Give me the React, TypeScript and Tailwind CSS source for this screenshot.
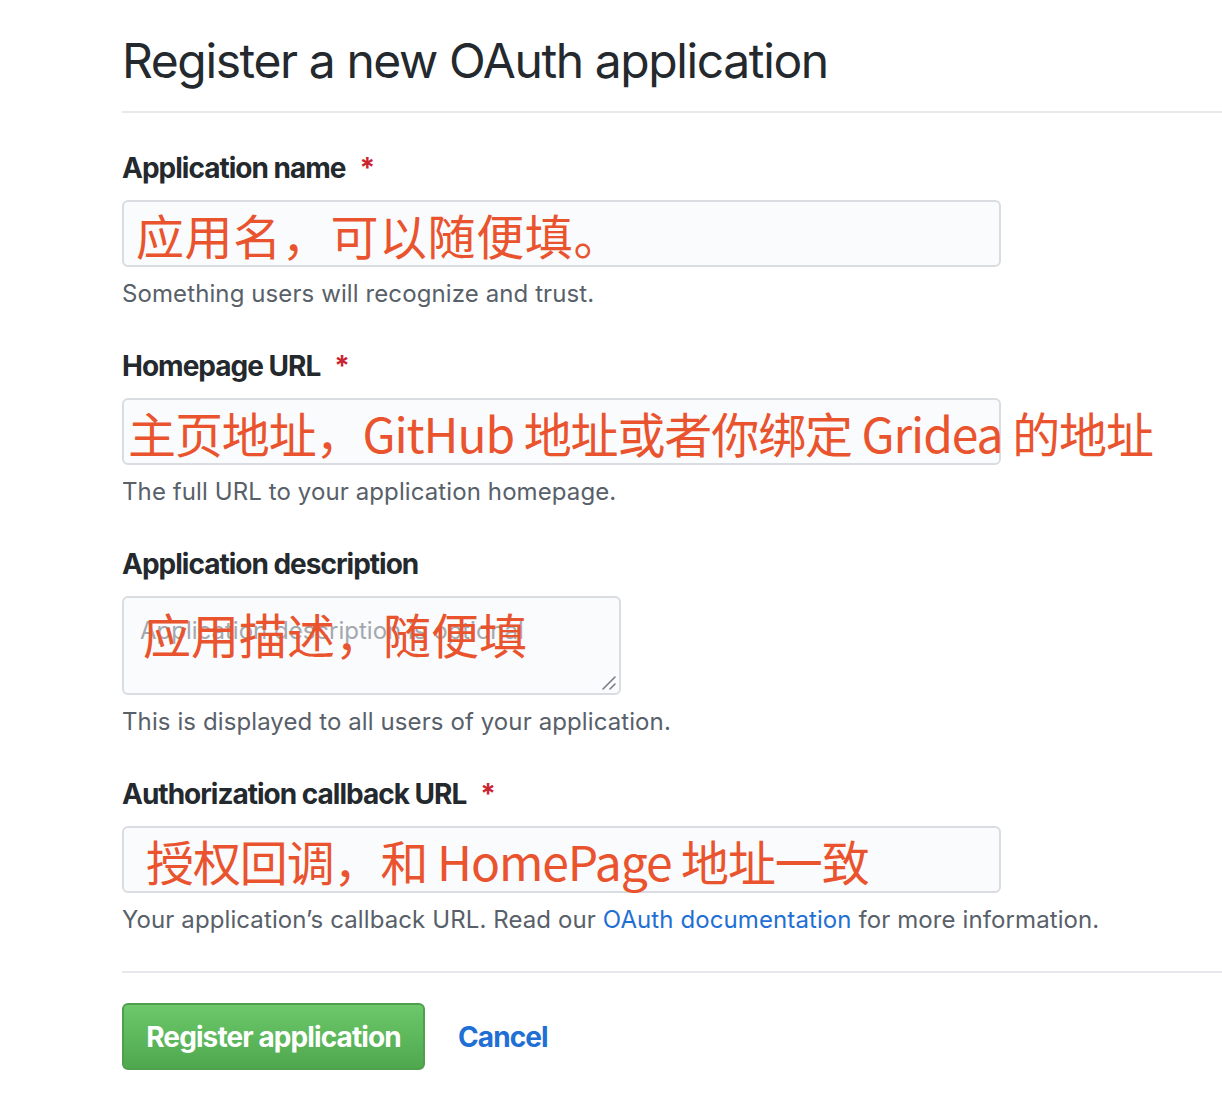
import React from "react";

const sans = "font-['Inter','Liberation_Sans','Noto_Sans_CJK_SC',sans-serif]";
const note = "font-['Noto_Sans_CJK_SC','Noto_Sans_CJK_SC',sans-serif]";

interface FieldProps {
  label: string;
  required?: boolean;
  children: React.ReactNode;
  hint: React.ReactNode;
}

const Field = ({ label, required, children, hint }: FieldProps) => (
  <div className="mb-[33px]">
    <label className="block h-[42px] text-[28px] leading-[42px] font-bold tracking-[-1px] text-[#24292e]">
      {label}
      {required && <span className="ml-[14px] text-[#cb2431]">*</span>}
    </label>
    <div className="mt-[11px]">{children}</div>
    <p className="mt-[9px] h-[36px] text-[24px] leading-[36px] tracking-[0.1px] text-[#586069]">{hint}</p>
  </div>
);

const TextBox = ({ text, pad }: { text: string; pad: string }) => (
  <div
    className={`flex h-[67px] w-[879px] items-center rounded-[6px] border-2 border-[#d9dce0] bg-[#fafbfc] ${pad}`}
  >
    <span className={`${note} whitespace-nowrap text-[48px] leading-none text-[#e9542f]`}>{text}</span>
  </div>
);

export default function App() {
  return (
    <div className={`${sans} min-h-[1114px] w-[1222px] bg-white pl-[122px] pt-[30px]`}>
      <div className="border-b-2 border-[#e6e8eb] pb-[19px]">
        <h1 className="text-[48px] leading-[62px] font-normal tracking-[-1.4px] text-[#24292e]">
          Register a new OAuth application
        </h1>
      </div>

      <form className="pt-[34px]">
        <Field label="Application name" required hint="Something users will recognize and trust.">
          <TextBox text="应用名，可以随便填。" pad="pl-[12px] tracking-[0.6px]" />
        </Field>

        <Field label="Homepage URL" required hint="The full URL to your application homepage.">
          <TextBox text="主页地址，GitHub 地址或者你绑定 Gridea 的地址" pad="pl-[4px] tracking-[-1.1px]" />
        </Field>

        <Field label="Application description" hint="This is displayed to all users of your application.">
          <div className="relative h-[99px] w-[499px] rounded-[6px] border-2 border-[#d9dce0] bg-[#fafbfc] px-[16px] pt-[15px]">
            <span className="block text-[24px] leading-[36px] text-[#a3a8ae]">Application description is optional</span>
            <span
              className={`${note} absolute left-[19px] top-[11px] whitespace-nowrap text-[48px] leading-none text-[#e9542f]`}
            >
              应用描述，随便填
            </span>
            <svg className="absolute bottom-[2px] right-[2px]" width="16" height="16" viewBox="0 0 16 16">
              <path d="M2 14 L14 2 M9 14 L14 9" stroke="#7a7f85" strokeWidth="1.6" strokeLinecap="round" />
            </svg>
          </div>
        </Field>

        <Field
          label="Authorization callback URL"
          required
          hint={
            <>
              Your application’s callback URL. Read our{" "}
              <a className="text-[#1f6fd4]" href="#">
                OAuth documentation
              </a>{" "}
              for more information.
            </>
          }
        >
          <TextBox text="授权回调，和 HomePage 地址一致" pad="pl-[22px] tracking-[-1.1px]" />
        </Field>

        <div className="border-t-2 border-[#e6e8eb] pt-[30px]">
          <div className="flex items-center gap-[33px]">
            <button
              type="button"
              className="h-[67px] w-[303px] rounded-[6px] border-2 border-[#4f9f4e] bg-gradient-to-b from-[#6cc86a] to-[#4fa84e] text-[28px] font-bold tracking-[-0.9px] text-white"
            >
              Register application
            </button>
            <a href="#" className="text-[28px] font-bold tracking-[-0.9px] text-[#1f6fd4]">
              Cancel
            </a>
          </div>
        </div>
      </form>
    </div>
  );
}
